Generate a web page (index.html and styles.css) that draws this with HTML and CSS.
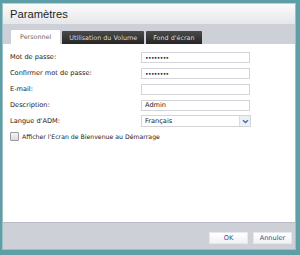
FILE: index.html
```html
<!DOCTYPE html>
<html>
<head>
<meta charset="utf-8">
<link rel="stylesheet" href="styles.css">
</head>
<body>
<div class="win">
  <div class="titlebar">Paramètres</div>
  <div class="tabbar">
    <div class="tab active">Personnel</div>
    <div class="tab">Utilisation du Volume</div>
    <div class="tab">Fond d'écran</div>
  </div>
  <div class="content">
    <div class="row"><span class="lbl">Mot de passe:</span><div class="inp pw">••••••••</div></div>
    <div class="row"><span class="lbl">Confirmer mot de passe:</span><div class="inp pw">••••••••</div></div>
    <div class="row"><span class="lbl">E-mail:</span><div class="inp"></div></div>
    <div class="row"><span class="lbl">Description:</span><div class="inp">Admin</div></div>
    <div class="row"><span class="lbl">Langue d'ADM:</span><div class="inp sel"><span class="selv">Français</span><span class="arrow"><svg width="7" height="5" viewBox="0 0 7 5"><path d="M1 1.2 L3.5 3.6 L6 1.2" fill="none" stroke="#3b6fc4" stroke-width="1.4"/></svg></span></div></div>
    <div class="chk"><span class="box"></span><span>Afficher l'Ecran de Bienvenue au Démarrage</span></div>
  </div>
  <div class="footer">
    <div class="btn">OK</div>
    <div class="btn">Annuler</div>
  </div>
</div>
</body>
</html>
```
FILE: styles.css
```css
html, body { margin: 0; padding: 0; }
body {
  width: 300px; height: 255px; overflow: hidden;
  background: #5e9ea6;
  font-family: "DejaVu Sans", Verdana, sans-serif;
  font-size: 6.6px;
  color: #222;
}
.win {
  margin: 3px 0 0 2px;
  width: 294px; height: 247px;
  border: 1px solid #9cc0c6;
  border-top-color: #b7d2d6;
  background: #fff;
  display: flex; flex-direction: column;
  box-sizing: border-box;
}
.titlebar {
  height: 20px;
  background: linear-gradient(#fbfbfc, #e6e7ea);
  font-family: "Liberation Sans", Arial, sans-serif;
  font-size: 11.2px;
  color: #1e1e1e;
  padding: 4px 0 0 7px;
  box-sizing: border-box;
}
.tabbar {
  height: 20px;
  background: #cdd0d7;
  display: flex; align-items: flex-end;
  padding-left: 8px; gap: 2px;
  box-sizing: border-box;
}
.tab {
  height: 13px;
  padding: 0 7px;
  background: linear-gradient(#4a4a4a, #262626);
  color: #dedede;
  display: flex; align-items: center;
  border-radius: 1px 1px 0 0;
  font-size: 6.4px;
}
.tab.active {
  height: 14px;
  background: #fff;
  color: #6a6a6a;
  padding: 0 9px;
}
.content {
  flex: 1;
  padding: 5px 0 0 7px;
}
.row {
  display: flex; align-items: center;
  height: 16px;
}
.lbl { width: 131px; }
.inp {
  width: 109px; height: 11px;
  border: 1px solid #d3d3da;
  box-sizing: border-box;
  padding-left: 3px;
  display: flex; align-items: center;
  background: #fff;
}
.pw { font-size: 6px; letter-spacing: -0.6px; color: #111; }
.sel { width: 110px; padding-right: 0; justify-content: space-between; height: 12px; }
.arrow {
  width: 10px; height: 100%;
  background: #eef0f4;
  border-left: 1px solid #dcdde3;
  display: flex; align-items: center; justify-content: center;
}
.chk {
  display: flex; align-items: center; gap: 3px;
  margin-top: 3px;
  font-size: 6.2px;
}
.box {
  width: 7px; height: 7px;
  border: 1px solid #9a9aa0;
  background: linear-gradient(#f4f4f4, #dcdcdc);
  border-radius: 1px;
}
.footer {
  height: 27px;
  background: #cdd0d7;
  border-top: 1px solid #b9bcc4;
  display: flex; justify-content: flex-end; align-items: flex-start;
  gap: 5px;
  padding: 9px 3px 0 0;
  box-sizing: border-box;
}
.btn {
  width: 39px; height: 12px;
  background: linear-gradient(#ffffff, #f1f2f4);
  border: 1px solid #e6e7ea;
  box-sizing: border-box;
  color: #34507e;
  display: flex; align-items: center; justify-content: center;
  font-size: 6.6px;
}
```
